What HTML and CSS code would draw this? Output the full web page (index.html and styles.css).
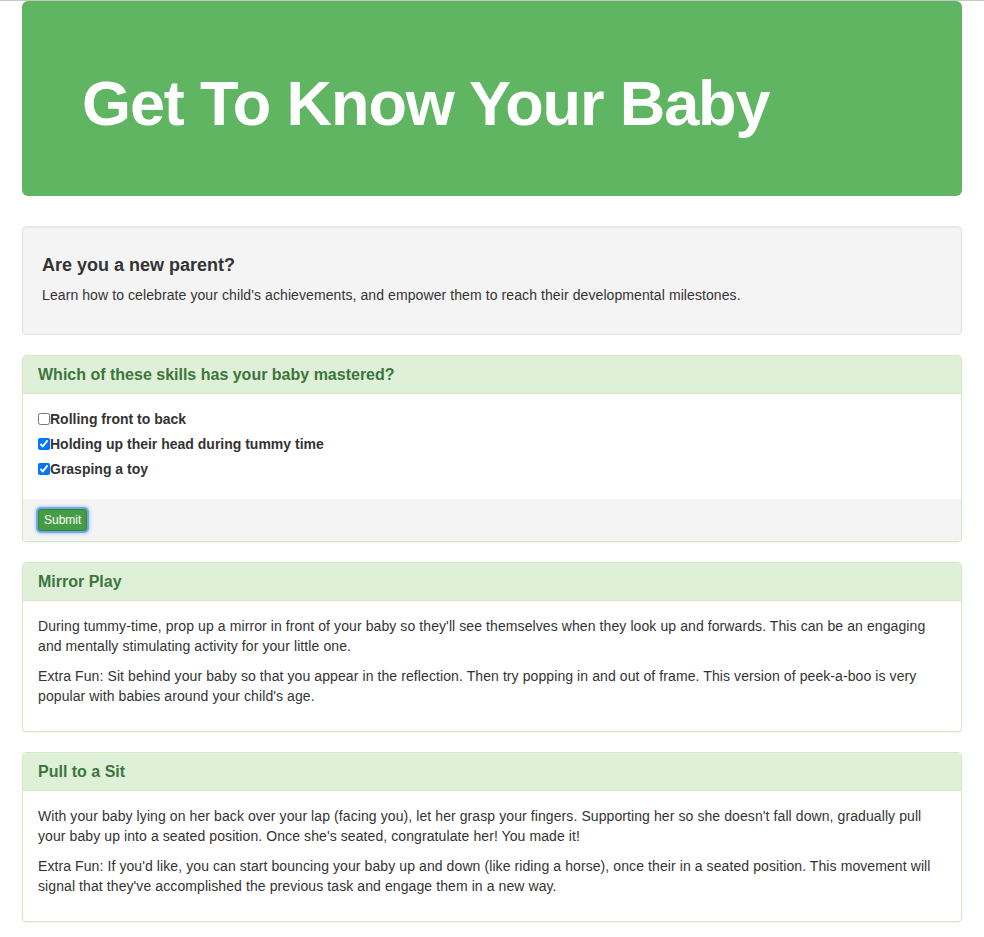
FILE: index.html
```html
<!DOCTYPE html>
<html lang="en">
<head>
<meta charset="utf-8">
<title>Get To Know Your Baby</title>
<link rel="stylesheet" href="styles.css">
</head>
<body>
<div class="container">
  <div class="jumbotron">
    <h1>Get To Know Your Baby</h1>
  </div>

  <div class="well">
    <h4>Are you a new parent?</h4>
    <p>Learn how to celebrate your child's achievements, and empower them to reach their developmental milestones.</p>
  </div>

  <form class="panel">
    <div class="panel-heading"><h3 class="panel-title">Which of these skills has your baby mastered?</h3></div>
    <div class="panel-body">
      <div class="check"><label><input type="checkbox">Rolling front to back</label></div>
      <div class="check"><label><input type="checkbox" checked>Holding up their head during tummy time</label></div>
      <div class="check"><label><input type="checkbox" checked>Grasping a toy</label></div>
    </div>
    <div class="panel-footer">
      <button type="button" class="btn">Submit</button>
    </div>
  </form>

  <div class="panel">
    <div class="panel-heading"><h3 class="panel-title">Mirror Play</h3></div>
    <div class="panel-body">
      <p>During tummy-time, prop up a mirror in front of your baby so they'll see themselves when they look up and forwards. This can be an engaging and mentally stimulating activity for your little one.</p>
      <p>Extra Fun: Sit behind your baby so that you appear in the reflection. Then try popping in and out of frame. This version of peek-a-boo is very popular with babies around your child's age.</p>
    </div>
  </div>

  <div class="panel">
    <div class="panel-heading"><h3 class="panel-title">Pull to a Sit</h3></div>
    <div class="panel-body">
      <p>With your baby lying on her back over your lap (facing you), let her grasp your fingers. Supporting her so she doesn't fall down, gradually pull your baby up into a seated position. Once she's seated, congratulate her! You made it!</p>
      <p>Extra Fun: If you'd like, you can start bouncing your baby up and down (like riding a horse), once their in a seated position. This movement will signal that they've accomplished the previous task and engage them in a new way.</p>
    </div>
  </div>
</div>
</body>
</html>
```

FILE: styles.css
```css
* { box-sizing: border-box; }
html, body { margin: 0; padding: 0; }
body {
  font-family: "Liberation Sans", Arial, sans-serif;
  font-size: 14px;
  line-height: 20px;
  letter-spacing: 0.09px;
  color: #333;
  background: #fff;
  border-top: 1px solid #c8c8c8;
}
.container {
  width: 970px;
  margin: 0 auto;
  padding: 0 15px;
}
.jumbotron {
  background: #5fb562;
  border-radius: 6px;
  padding: 48px 60px;
  margin-bottom: 30px;
  color: #fff;
}
.jumbotron h1 {
  margin: 20px 0 10px;
  font-size: 63px;
  line-height: 69px;
  font-weight: bold;
  letter-spacing: -1.1px;
}
.well {
  background: #f4f4f4;
  border: 1px solid #e3e3e3;
  border-radius: 4px;
  padding: 19px;
  margin-bottom: 20px;
  box-shadow: inset 0 1px 1px rgba(0,0,0,.05);
}
.well h4 {
  margin: 10px 0 10px;
  font-size: 18px;
  line-height: 19px;
  font-weight: bold;
  letter-spacing: 0;
}
.well p { margin: 0 0 10px; }
.panel {
  display: block;
  background: #fff;
  border: 1px solid #d6e9c6;
  border-radius: 4px;
  margin: 0 0 20px;
  box-shadow: 0 1px 1px rgba(0,0,0,.05);
}
.panel-heading {
  background: #dff0d8;
  color: #3c763d;
  border-bottom: 1px solid #d6e9c6;
  border-radius: 3px 3px 0 0;
  padding: 10px 15px;
}
.panel-title {
  margin: 0;
  font-size: 16px;
  line-height: 17px;
  font-weight: bold;
  letter-spacing: 0;
}
.panel-body { padding: 15px; }
.panel-body p { margin: 0 0 10px; }
.check label {
  display: inline-block;
  font-weight: bold;
  margin-bottom: 5px;
  line-height: 20px;
  letter-spacing: 0;
}
.check input {
  margin: 0;
  width: 12px;
  height: 12px;
  vertical-align: -1px;
}
.panel-footer {
  background: #f4f4f4;
  padding: 10px 15px;
  border-radius: 0 0 3px 3px;
}
.btn {
  display: block;
  font-family: "Liberation Sans", Arial, sans-serif;
  font-size: 12px;
  line-height: 18px;
  font-weight: normal;
  padding: 1px 5px;
  color: #fff;
  background: #449d44;
  border: 1px solid #398439;
  border-radius: 3px;
  box-shadow: 0 0 0 2px rgba(86,154,230,.75), 0 0 3px 3px rgba(86,154,230,.4);
  cursor: pointer;
}
```
